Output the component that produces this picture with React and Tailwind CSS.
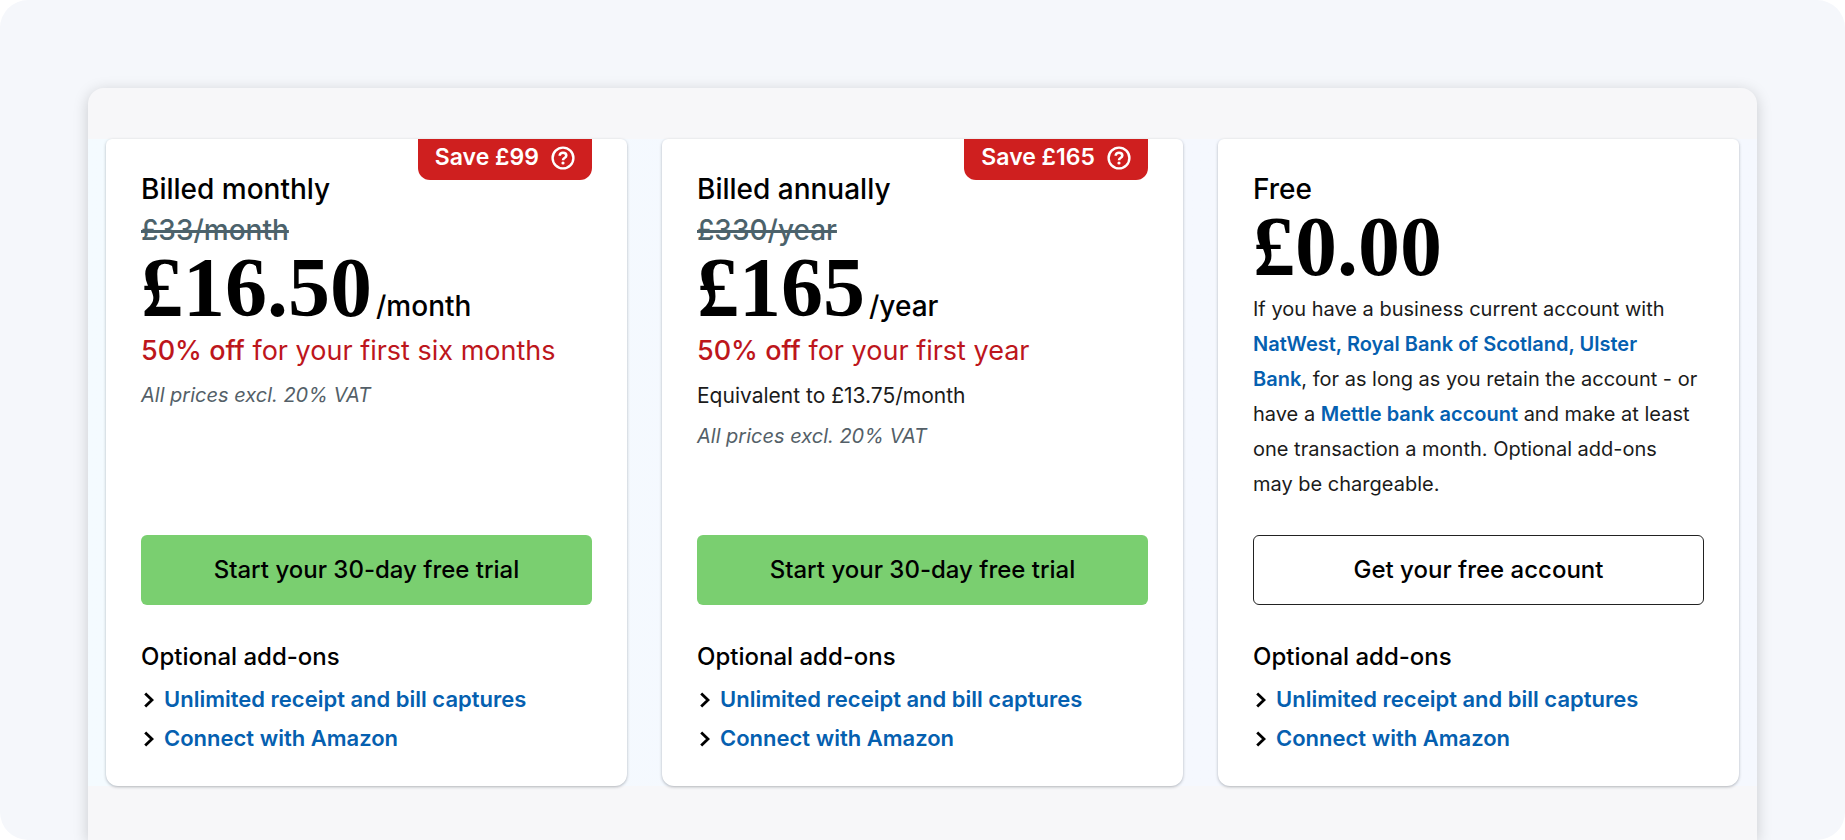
import React from "react";

const ADD_ONS = ["Unlimited receipt and bill captures", "Connect with Amazon"];

function HelpIcon() {
  return (
    <svg viewBox="0 0 24 24" className="size-6" fill="none" stroke="currentColor" aria-hidden="true">
      <circle cx="12" cy="12" r="10.4" strokeWidth="2.4" />
      <path d="M8.7 9.8c0-2 1.4-3.1 3.3-3.1s3.3 1.1 3.3 2.8c0 1.3-.8 1.9-1.8 2.5-.9.6-1.5 1-1.5 2.2" strokeWidth="2.6" />
      <circle cx="12" cy="17" r="1.6" fill="currentColor" stroke="none" />
    </svg>
  );
}

function Chevron() {
  return (
    <svg viewBox="0 0 12 16" className="h-4 w-3 shrink-0" fill="none" stroke="#000" strokeWidth="2.8" aria-hidden="true">
      <path d="M1.2 1.4 8 8l-6.8 6.6" />
    </svg>
  );
}

function TextLink({ children }) {
  return (
    <a href="#" className="font-semibold text-[#0560b0] hover:underline">
      {children}
    </a>
  );
}

function SaveBadge({ amount }) {
  return (
    <div className="absolute top-0 right-[35px] flex h-[41px] items-center gap-3 rounded-b-xl bg-[#cf1f1f] px-[17px] pb-1 text-[23px] font-semibold text-white">
      <span>Save {amount}</span>
      <button type="button" aria-label="About this saving" className="cursor-pointer">
        <HelpIcon />
      </button>
    </div>
  );
}

function PlanCard({ title, was, price, unit, save, action, outlined, children }) {
  return (
    <section className="relative flex flex-col rounded-t-md rounded-b-xl bg-white px-[35px] pt-[29px] pb-7 shadow-[0_1px_3px_rgba(40,50,60,0.35)]">
      {save && <SaveBadge amount={save} />}
      <div className="flex-1">
        <h2 className="text-[28px] leading-[42px] font-medium">{title}</h2>
        {was && (
          <p className="text-[28px] leading-[41px] font-medium text-[#4c626b]">
            <s className="decoration-[3px]">{was}</s>
          </p>
        )}
        <p className="flex items-baseline gap-1">
          <span className="font-['Liberation_Serif',serif] text-[84px] leading-[73px] font-bold">{price}</span>
          {unit && <span className="text-[28px] leading-[28px] font-medium">{unit}</span>}
        </p>
        {children}
      </div>
      <button
        type="button"
        className={
          outlined
            ? "mt-[33px] h-[70px] cursor-pointer rounded-md border border-[#222] bg-white text-2xl font-medium"
            : "mt-[33px] h-[70px] cursor-pointer rounded-md bg-[#7acf70] text-2xl font-medium"
        }
      >
        {action}
      </button>
      <h3 className="mt-[35px] text-2xl leading-[34px] font-medium">Optional add-ons</h3>
      <ul className="mt-1.5 text-[22px] leading-[39px] font-semibold">
        {ADD_ONS.map((name) => (
          <li key={name} className="flex items-center gap-2 pl-[3px]">
            <Chevron />
            <a href="#" className="text-[#0560b0] hover:underline">
              {name}
            </a>
          </li>
        ))}
      </ul>
    </section>
  );
}

function Offer({ children }) {
  return (
    <p className="mt-1.5 text-[27px] leading-[42px] text-[#bd161c]">
      <b className="font-medium">50% off</b> {children}
    </p>
  );
}

function VatNote() {
  return <p className="mt-1.5 text-[20px] leading-[35px] text-[#545f68] italic">All prices excl. 20% VAT</p>;
}

export default function App() {
  return (
    <div className="bg-white font-['Inter',sans-serif] text-black">
      <main className="flex min-h-screen flex-col overflow-hidden rounded-[28px] bg-[#f5f7fb] px-[88px] pt-[88px]">
        <div className="flex-1 rounded-t-2xl bg-[#f7f7f9] pt-[51px] pb-[54px] shadow-[0_3px_15px_rgba(0,0,0,0.18)]">
          <div className="grid grid-cols-3 gap-[35px] bg-linear-to-r from-[#f4fbff] via-[#f5f8fe] to-[#f5f8fe] px-[18px]">
            <PlanCard
              title="Billed monthly"
              was="£33/month"
              price="£16.50"
              unit="/month"
              save="£99"
              action="Start your 30-day free trial"
            >
              <Offer>for your first six months</Offer>
              <VatNote />
            </PlanCard>
            <PlanCard
              title="Billed annually"
              was="£330/year"
              price="£165"
              unit="/year"
              save="£165"
              action="Start your 30-day free trial"
            >
              <Offer>for your first year</Offer>
              <p className="mt-1.5 text-[21px] leading-[35px] text-[#1b1b1b]">Equivalent to £13.75/month</p>
              <VatNote />
            </PlanCard>
            <PlanCard title="Free" price="£0.00" action="Get your free account" outlined>
              <p className="mt-[9px] pr-1 text-[20px] leading-[35px] text-[#1b1b1b]">
                If you have a business current account with{" "}
                <TextLink>
                  NatWest, Royal Bank of Scotland, Ulster
                  <br />
                  Bank
                </TextLink>
                , for as long as you retain the account - or have a <TextLink>Mettle bank account</TextLink> and
                make at least one transaction a month. Optional add-ons may be chargeable.
              </p>
            </PlanCard>
          </div>
        </div>
      </main>
    </div>
  );
}
